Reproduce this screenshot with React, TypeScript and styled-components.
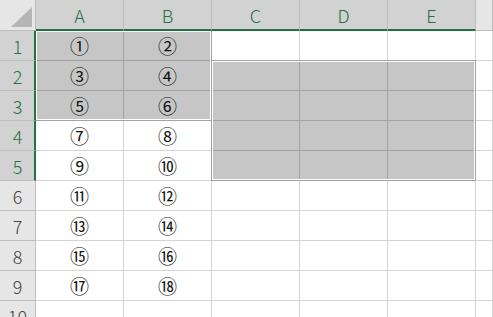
import styled, { createGlobalStyle } from "styled-components";

const GREEN = "#217346";
const COLS = ["A", "B", "C", "D", "E"];
const ROWS = [1, 2, 3, 4, 5, 6, 7, 8, 9, 10];
const CIRCLED = "①②③④⑤⑥⑦⑧⑨⑩⑪⑫⑬⑭⑮⑯⑰⑱";

// cells painted gray by the two selected ranges (A1:B3 and C2:E5)
const isFilled = (row: number, col: number) =>
  (row <= 3 && col <= 1) || (row >= 2 && row <= 5 && col >= 2);

const cellText = (row: number, col: number) =>
  col <= 1 && row <= 9 ? CIRCLED[(row - 1) * 2 + col] : "";

export default function App() {
  return (
    <>
      <GlobalStyle />
      <Sheet>
        <Corner>
          <CornerMark />
        </Corner>
        {COLS.map((c) => (
          <ColHeader key={c} $active>
            {c}
          </ColHeader>
        ))}
        <ColHeader $active={false} />

        {ROWS.map((r) => (
          <Row key={r} row={r} />
        ))}

        <Selection $left={36} $top={31} $width={176} $height={90} $edges="rb" />
        <Selection $left={211} $top={60} $width={265} $height={121} $edges="all" />
      </Sheet>
    </>
  );
}

function Row({ row }: { row: number }) {
  return (
    <>
      <RowHeader $active={row <= 5}>{row}</RowHeader>
      {COLS.map((_, i) => (
        <Cell key={i} $filled={isFilled(row, i)}>
          {cellText(row, i)}
        </Cell>
      ))}
      <Cell $filled={false} />
    </>
  );
}

const GlobalStyle = createGlobalStyle`
  html, body {
    margin: 0;
    padding: 0;
    background: #fff;
    overflow: hidden;
  }
  body {
    font-family: "Noto Sans CJK JP", "Noto Sans", sans-serif;
  }
`;

const Sheet = styled.div`
  position: relative;
  display: grid;
  grid-template-columns: 36px repeat(5, 88px) 1fr;
  grid-template-rows: 31px repeat(10, 30px);
  width: 493px;
  height: 317px;
  overflow: hidden;
`;

const HeaderBase = styled.div`
  box-sizing: border-box;
  display: flex;
  align-items: center;
  justify-content: center;
  font-size: 18px;
  font-weight: 300;
`;

const Corner = styled(HeaderBase)`
  position: relative;
  background: #e6e6e6;
  border-right: 1px solid #bdbdbd;
  border-bottom: 1px solid #bdbdbd;
`;

const CornerMark = styled.div`
  position: absolute;
  right: 3px;
  bottom: 3px;
  width: 21px;
  height: 20px;
  background: #b5b5b5;
  clip-path: polygon(100% 0, 100% 100%, 0 100%);
`;

const ColHeader = styled(HeaderBase)<{ $active: boolean }>`
  background: ${(p) => (p.$active ? "#d2d2d2" : "#e6e6e6")};
  color: ${(p) => (p.$active ? GREEN : "#444")};
  border-right: 1px solid #bdbdbd;
  border-bottom: ${(p) => (p.$active ? `2px solid ${GREEN}` : "1px solid #bdbdbd")};
  padding-top: ${(p) => (p.$active ? "1px" : "0")};
`;

const RowHeader = styled(HeaderBase)<{ $active: boolean }>`
  background: ${(p) => (p.$active ? "#d2d2d2" : "#e6e6e6")};
  color: ${(p) => (p.$active ? GREEN : "#444")};
  border-right: ${(p) => (p.$active ? `2px solid ${GREEN}` : "1px solid #bdbdbd")};
  border-bottom: 1px solid #bdbdbd;
  padding-left: ${(p) => (p.$active ? "1px" : "0")};
`;

const Cell = styled.div<{ $filled: boolean }>`
  box-sizing: border-box;
  display: flex;
  align-items: center;
  justify-content: center;
  background: ${(p) => (p.$filled ? "#c6c6c6" : "#fff")};
  border-right: 1px solid ${(p) => (p.$filled ? "#a3a3a3" : "#d4d4d4")};
  border-bottom: 1px solid ${(p) => (p.$filled ? "#a3a3a3" : "#d4d4d4")};
  color: #111;
  font-size: 19px;
  line-height: 1;
`;

const Selection = styled.div<{
  $left: number;
  $top: number;
  $width: number;
  $height: number;
  $edges: "rb" | "all";
}>`
  position: absolute;
  box-sizing: border-box;
  left: ${(p) => p.$left}px;
  top: ${(p) => p.$top}px;
  width: ${(p) => p.$width}px;
  height: ${(p) => p.$height}px;
  border: 1px solid #a3a3a3;
  ${(p) => (p.$edges === "rb" ? "border-top: 0; border-left: 0;" : "")}
  box-shadow: inset 0 0 0 1px #fff;
  pointer-events: none;
`;
